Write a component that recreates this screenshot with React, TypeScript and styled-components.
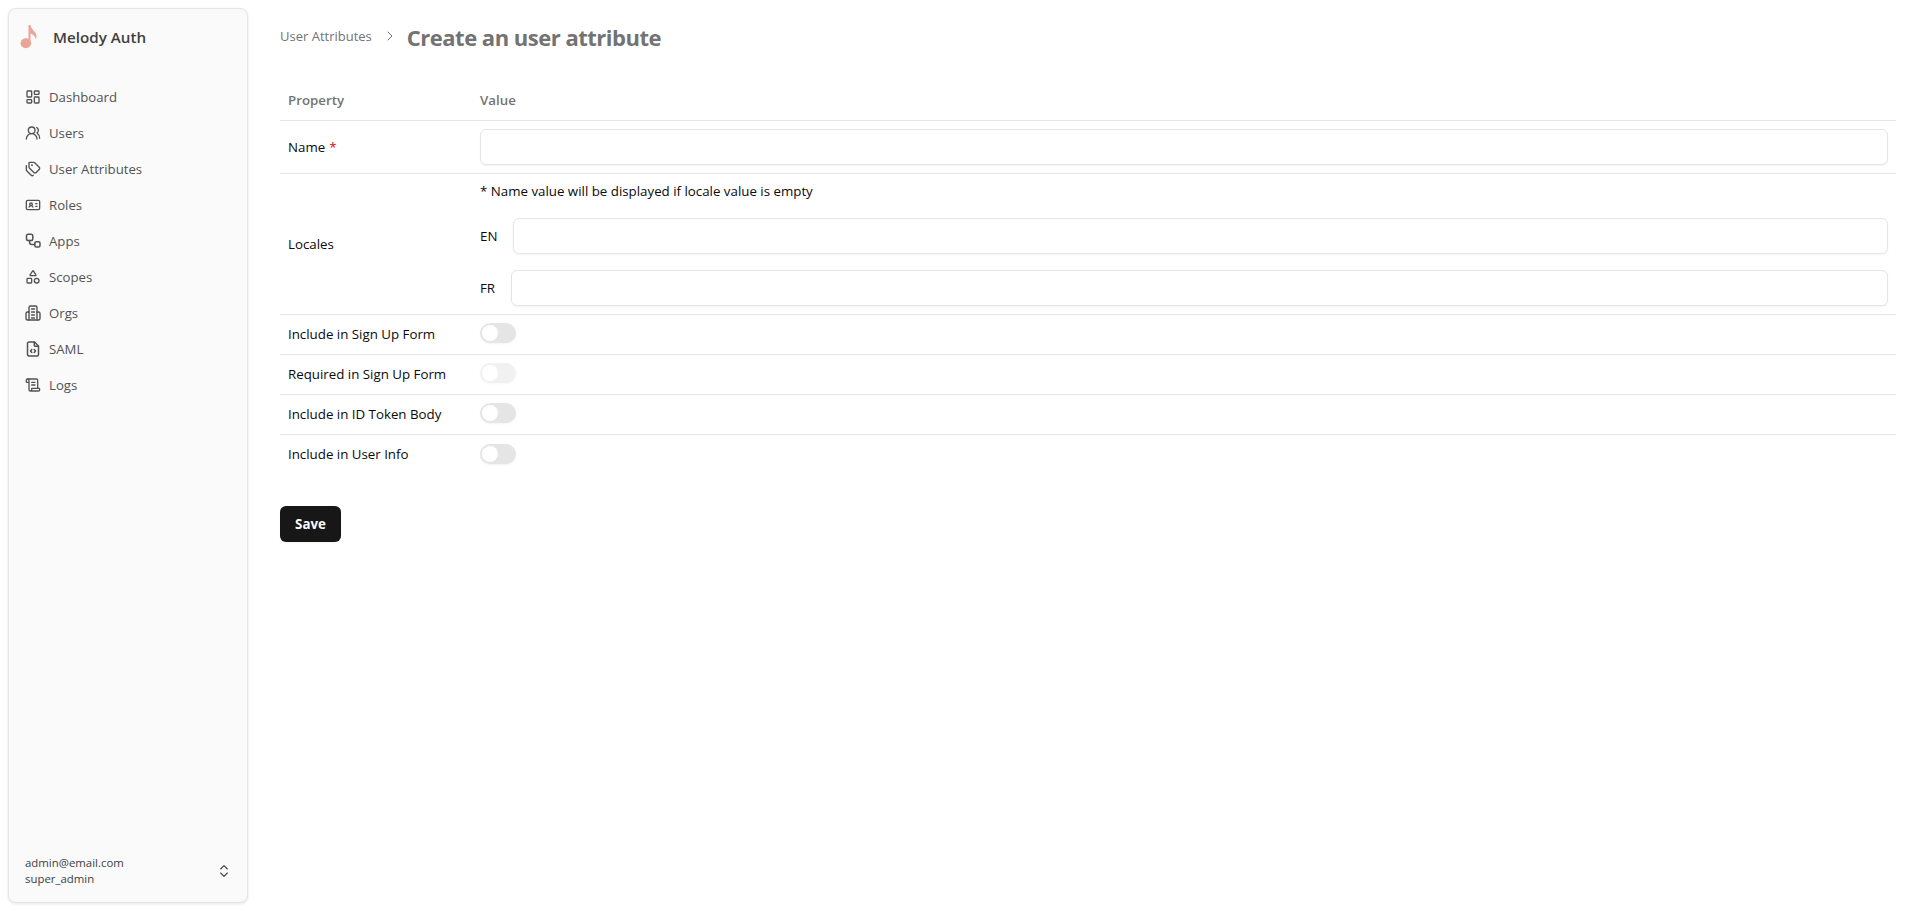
import React from 'react'
import styled, { createGlobalStyle } from 'styled-components'
import {
  LayoutDashboard,
  UsersRound,
  Tags,
  IdCard,
  Shapes,
  ScrollText,
  ChevronRight,
  ChevronsUpDown,
} from 'lucide-react'

const GlobalStyle = createGlobalStyle`
  * {
    box-sizing: border-box;
  }
  html, body {
    margin: 0;
    padding: 0;
    background: #fff;
    font-family: "Open Sans", "Noto Sans", "Liberation Sans", sans-serif;
  }
`

const Page = styled.div`
  display: flex;
  height: 911px;
  padding: 8px 24px 8px 8px;
  overflow: hidden;
`

const Sidebar = styled.aside`
  width: 240px;
  flex-shrink: 0;
  display: flex;
  flex-direction: column;
  background: #fafafa;
  border: 1px solid #e5e5e5;
  border-radius: 8px;
  box-shadow: 0 1px 3px rgba(0, 0, 0, 0.1);
`

const Brand = styled.div`
  display: flex;
  align-items: center;
  gap: 15px;
  height: 52px;
  padding-left: 11px;
  margin-top: 2px;
  font-size: 15.2px;
  font-weight: 600;
  color: #404040;
`

const NavList = styled.nav`
  display: flex;
  flex-direction: column;
  margin-top: 16px;
  padding: 0 16px;
`

const NavItem = styled.a`
  display: flex;
  align-items: center;
  gap: 8px;
  height: 36px;
  font-size: 13.2px;
  color: #525252;
  svg {
    flex-shrink: 0;
  }
`

const Account = styled.div`
  margin-top: auto;
  display: flex;
  align-items: center;
  justify-content: space-between;
  padding: 0 15px 15px 16px;
  font-size: 11.4px;
  line-height: 16px;
  color: #404040;
`

const Main = styled.main`
  flex: 1;
  margin-left: 32px;
  min-width: 0;
`

const Crumbs = styled.div`
  display: flex;
  align-items: center;
  height: 40px;
  margin-top: 9px;
`

const CrumbLink = styled.a`
  margin-bottom: 2px;
  font-size: 13px;
  color: #737373;
`

const CrumbArrow = styled.span`
  display: flex;
  margin: 0 9px 2px 10px;
  color: #737373;
`

const Title = styled.h1`
  margin: 0;
  font-size: 22px;
  font-weight: 700;
  letter-spacing: -0.5px;
  color: #737373;
`

const Table = styled.div`
  margin-top: 24px;
`

const Row = styled.div<{ $height: number; $last?: boolean }>`
  display: grid;
  grid-template-columns: 192px 1fr;
  align-items: center;
  height: ${(p) => p.$height}px;
  border-bottom: ${(p) => (p.$last ? 'none' : '1px solid #e5e5e5')};
  padding: 0 8px;
  font-size: 13.3px;
  color: #0a0a0a;
`

const HeadCell = styled.div`
  padding-bottom: 2px;
  font-size: 13.3px;
  font-weight: 600;
  color: #737373;
`

const ToggleLabel = styled.div`
  padding-bottom: 2px;
`

const Required = styled.span`
  color: #e7000b;
  margin-left: 4px;
`

const Input = styled.input`
  flex: 1;
  width: 100%;
  min-width: 0;
  height: 36px;
  background: #fff;
  border: 1px solid #e5e5e5;
  border-radius: 6px;
  box-shadow: 0 1px 2px rgba(0, 0, 0, 0.05);
  outline: none;
`

const LocaleStack = styled.div`
  display: flex;
  flex-direction: column;
  margin-bottom: 1px;
`

const LocaleHint = styled.p`
  margin: 0 0 17px;
  font-size: 13.3px;
  line-height: 20px;
  color: #0a0a0a;
`

const LocaleRow = styled.label`
  display: flex;
  align-items: center;
  gap: 16px;
  & + & {
    margin-top: 16px;
  }
`

const Switch = styled.span<{ $disabled?: boolean }>`
  display: block;
  width: 36px;
  height: 20px;
  margin-bottom: 3px;
  padding: 2px;
  border-radius: 10px;
  background: #e5e5e5;
  box-shadow: 0 1px 2px rgba(0, 0, 0, 0.05);
  opacity: ${(p) => (p.$disabled ? 0.5 : 1)};
  &::before {
    content: '';
    display: block;
    width: 16px;
    height: 16px;
    border-radius: 50%;
    background: #fff;
  }
`

const SaveButton = styled.button`
  display: block;
  margin-top: 31px;
  width: 61px;
  height: 36px;
  border: none;
  border-radius: 6px;
  background: #171717;
  color: #fafafa;
  font-family: inherit;
  font-size: 13.3px;
  font-weight: 700;
  box-shadow: 0 1px 2px rgba(0, 0, 0, 0.05);
`

type IconProps = { size?: number }

// Drawn by hand: the icon packages have no exact match for these three
const AppsIcon = ({ size = 16 }: IconProps) => (
  <svg width={size} height={size} viewBox="0 0 16 16" fill="none" stroke="currentColor" strokeWidth={1.5} strokeLinecap="round" strokeLinejoin="round">
    <rect x="1.500" y="1.200" width="6.300" height="6.300" rx="1.800" />
    <rect x="9.800" y="8.800" width="5.200" height="5.200" rx="1.500" />
    <path d="M4.600 7.500v1.700a2.200 2.200 0 0 0 2.200 2.200h3" />
  </svg>
)

const OrgsIcon = ({ size = 16 }: IconProps) => (
  <svg width={size} height={size} viewBox="0 0 16 16" fill="none" stroke="currentColor" strokeWidth={1.4} strokeLinecap="round" strokeLinejoin="round">
    <path d="M4 15V2.500A1.500 1.500 0 0 1 5.500 1h5A1.500 1.500 0 0 1 12 2.500V15" />
    <path d="M4 7H2.500A1.500 1.500 0 0 0 1 8.500v5A1.500 1.500 0 0 0 2.500 15h11a1.500 1.500 0 0 0 1.500-1.500v-5A1.500 1.500 0 0 0 13.500 7H12" />
    <path d="M6.500 4h3M6.500 7h3M6.500 10h3M6.500 13h3" />
  </svg>
)

const SamlIcon = ({ size = 16 }: IconProps) => (
  <svg width={size} height={size} viewBox="0 0 16 16" fill="none" stroke="currentColor" strokeWidth={1.5} strokeLinecap="round" strokeLinejoin="round">
    <path d="M9.500 1H4a1.500 1.500 0 0 0-1.500 1.500v11A1.500 1.500 0 0 0 4 15h8a1.500 1.500 0 0 0 1.500-1.500V5z" />
    <path d="M9.300 1.200v3.300a.7.7 0 0 0 .7.7h3.300" />
    <path d="M6.800 8.500 5.500 10l1.300 1.500M9.200 8.500l1.300 1.500-1.300 1.500" />
  </svg>
)

const MelodyLogo = () => (
  <svg width="18" height="24" viewBox="0 0 18 24" fill="#eba498">
    <ellipse cx="5.800" cy="18.300" rx="5.300" ry="5" />
    <path d="M8.500 0h1.900c.5 3.500 3.200 5.300 5 7.800 1.500 2.200 1.400 4.700.4 6.700-.3-3.300-3.200-5.400-5.300-6V18.500H8.500z" />
  </svg>
)

const navItems = [
  { label: 'Dashboard', icon: LayoutDashboard },
  { label: 'Users', icon: UsersRound },
  { label: 'User Attributes', icon: Tags },
  { label: 'Roles', icon: IdCard },
  { label: 'Apps', icon: AppsIcon },
  { label: 'Scopes', icon: Shapes },
  { label: 'Orgs', icon: OrgsIcon },
  { label: 'SAML', icon: SamlIcon },
  { label: 'Logs', icon: ScrollText },
]

const toggles = [
  { label: 'Include in Sign Up Form' },
  { label: 'Required in Sign Up Form', disabled: true },
  { label: 'Include in ID Token Body' },
  { label: 'Include in User Info', last: true },
]

const App = () => (
  <>
    <GlobalStyle />
    <Page>
      <Sidebar>
        <Brand>
          <MelodyLogo />
          Melody Auth
        </Brand>
        <NavList>
          {navItems.map(({ label, icon: Icon }) => (
            <NavItem key={label}>
              <Icon size={16} />
              {label}
            </NavItem>
          ))}
        </NavList>
        <Account>
          <div>
            admin@email.com
            <br />
            super_admin
          </div>
          <ChevronsUpDown size={16} strokeWidth={1.7} />
        </Account>
      </Sidebar>
      <Main>
        <Crumbs>
          <CrumbLink>User Attributes</CrumbLink>
          <CrumbArrow>
            <ChevronRight size={16} strokeWidth={1.5} />
          </CrumbArrow>
          <Title>Create an user attribute</Title>
        </Crumbs>
        <Table>
          <Row $height={40}>
            <HeadCell>Property</HeadCell>
            <HeadCell>Value</HeadCell>
          </Row>
          <Row $height={53}>
            <div>
              Name<Required>*</Required>
            </div>
            <Input />
          </Row>
          <Row $height={141}>
            <div>Locales</div>
            <LocaleStack>
              <LocaleHint>* Name value will be displayed if locale value is empty</LocaleHint>
              <LocaleRow>
                EN
                <Input />
              </LocaleRow>
              <LocaleRow>
                FR
                <Input />
              </LocaleRow>
            </LocaleStack>
          </Row>
          {toggles.map((t) => (
            <Row key={t.label} $height={40} $last={t.last}>
              <ToggleLabel>{t.label}</ToggleLabel>
              <Switch $disabled={t.disabled} />
            </Row>
          ))}
        </Table>
        <SaveButton>Save</SaveButton>
      </Main>
    </Page>
  </>
)

export default App
